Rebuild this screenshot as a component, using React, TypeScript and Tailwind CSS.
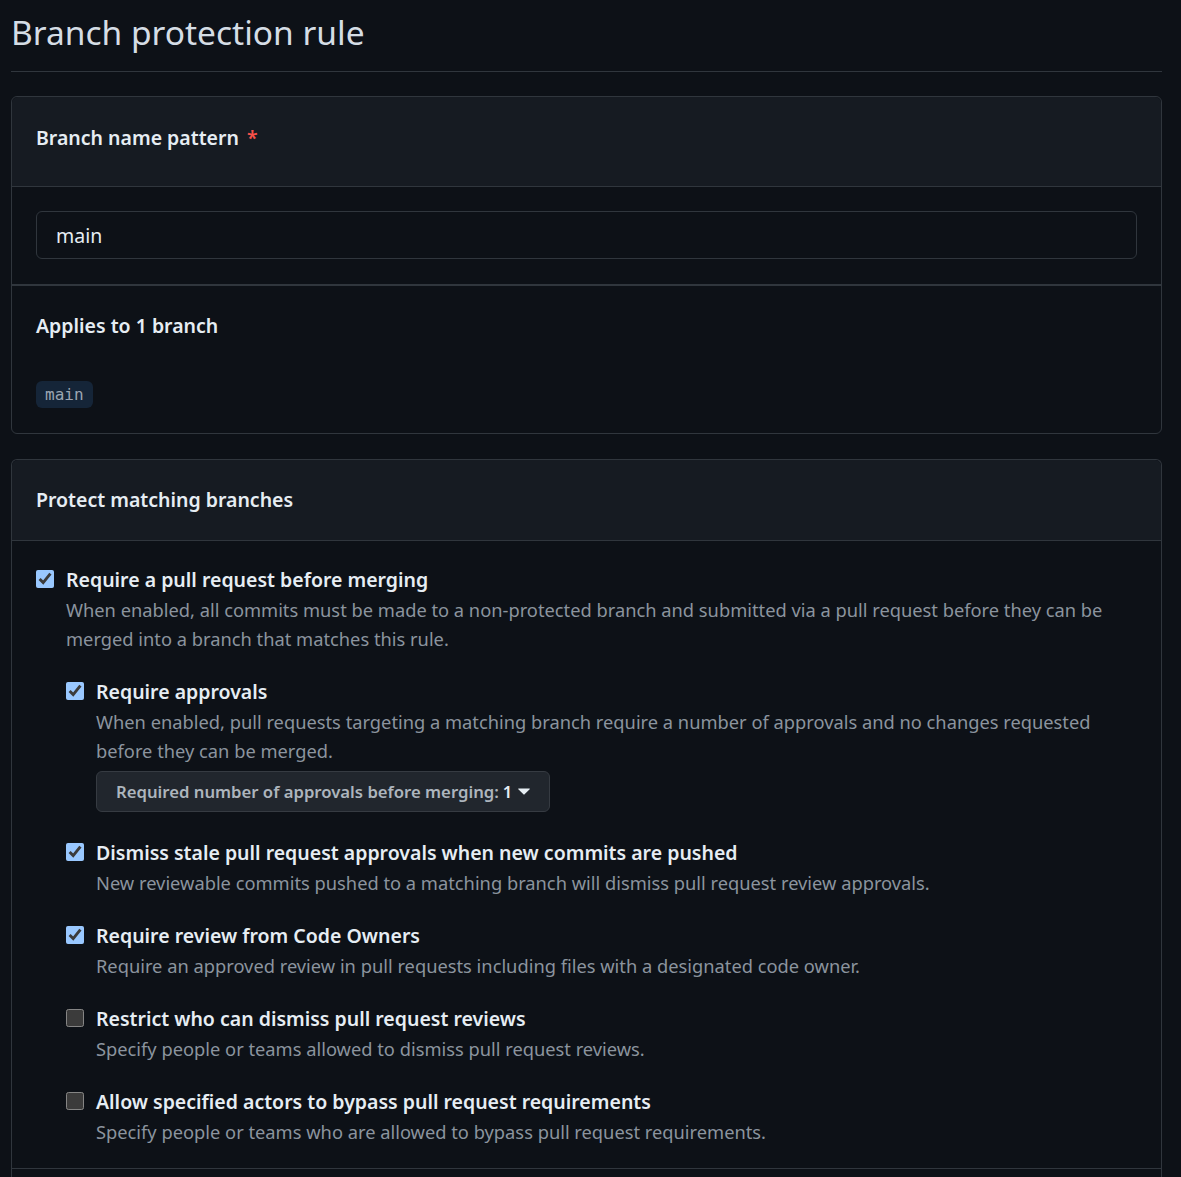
import React from 'react';

type Rule = {
  label: string;
  desc: string;
  checked: boolean;
  children?: React.ReactNode;
};

const Check: React.FC<{ checked: boolean }> = ({ checked }) => (
  <input
    type="checkbox"
    defaultChecked={checked}
    className="mt-[5px] m-0 h-[18px] w-[18px] shrink-0 [color-scheme:dark]"
  />
);

const RuleItem: React.FC<Rule> = ({ label, desc, checked, children }) => (
  <div className="flex gap-[12px]">
    <Check checked={checked} />
    <div className="min-w-0 flex-1">
      <div className="text-[19.5px] font-semibold leading-[30px] text-[#e6edf3]">{label}</div>
      <p className="text-[18.3px] leading-[29px] text-[#8b949e]">{desc}</p>
      {children}
    </div>
  </div>
);

const Caret = () => (
  <svg width="12" height="7" viewBox="0 0 12 7" className="ml-[6px] fill-current text-[#e6edf3]">
    <path d="M0.6 0.5h10.8a.4.4 0 0 1 .3.7L6.3 6.5a.45.45 0 0 1-.6 0L.3 1.2A.4.4 0 0 1 .6.5Z" />
  </svg>
);

const App: React.FC = () => {
  return (
    <div className="min-h-screen bg-[#0d1117] text-[#c9d1d9] font-['Noto_Sans',sans-serif]">
      <div className="pl-[11px] pr-[19px]">
        <h1 className="border-b border-[#30363d] pb-[16px] pt-[9px] text-[33.5px] font-normal leading-[46px] text-[#d5dde5]">
          Branch protection rule
        </h1>

        <section className="mt-[24px] rounded-[6px] border border-[#30363d]">
          <div className="flex h-[90px] items-center rounded-t-[6px] border-b border-[#30363d] bg-[#161b22] px-[24px] pb-[7px]">
            <h2 className="text-[19.5px] font-semibold text-[#e6edf3]">
              Branch name pattern <span className="ml-[3px] text-[#f85149]">*</span>
            </h2>
          </div>
          <div className="border-b-2 border-[#30363d] px-[24px] pb-[25px] pt-[24px]">
            <div className="flex h-[48px] items-center rounded-[6px] border border-[#30363d] bg-[#0d1117] px-[19px] pt-[2px] text-[19.5px] text-[#e6edf3]">
              main
            </div>
          </div>
          <div className="px-[24px] pb-[25px] pt-[25px]">
            <h3 className="text-[19.5px] font-semibold leading-[30px] text-[#e6edf3]">Applies to 1 branch</h3>
            <div className="mt-[40px] flex">
              <code className="rounded-[6px] bg-[#152538] px-[9px] py-[2px] font-['DejaVu_Sans_Mono',monospace] text-[16px] leading-[23px] text-[#9ba6b2]">
                main
              </code>
            </div>
          </div>
        </section>

        <section className="mt-[25px] rounded-t-[6px] border-x border-t border-[#30363d]">
          <div className="flex h-[81px] items-center rounded-t-[6px] border-b border-[#30363d] bg-[#161b22] px-[24px]">
            <h2 className="text-[19.5px] font-semibold text-[#e6edf3]">Protect matching branches</h2>
          </div>
          <div className="border-b border-[#30363d] px-[24px] pb-[22px] pt-[24px]">
            <RuleItem
              checked
              label="Require a pull request before merging"
              desc="When enabled, all commits must be made to a non-protected branch and submitted via a pull request before they can be merged into a branch that matches this rule."
            >
              <div className="mt-[24px] flex flex-col gap-[24px]">
                <RuleItem
                  checked
                  label="Require approvals"
                  desc="When enabled, pull requests targeting a matching branch require a number of approvals and no changes requested before they can be merged."
                >
                  <button className="mb-[2px] mt-[6px] flex h-[41px] items-center rounded-[6px] border border-[#363b42] bg-[#21262d] px-[19px] text-[16.7px] font-semibold text-[#adb5bd]">
                    Required number of approvals before merging: <span className="ml-[4px] text-[#e6edf3]">1</span>
                    <Caret />
                  </button>
                </RuleItem>
                <RuleItem
                  checked
                  label="Dismiss stale pull request approvals when new commits are pushed"
                  desc="New reviewable commits pushed to a matching branch will dismiss pull request review approvals."
                />
                <RuleItem
                  checked
                  label="Require review from Code Owners"
                  desc="Require an approved review in pull requests including files with a designated code owner."
                />
                <RuleItem
                  checked={false}
                  label="Restrict who can dismiss pull request reviews"
                  desc="Specify people or teams allowed to dismiss pull request reviews."
                />
                <RuleItem
                  checked={false}
                  label="Allow specified actors to bypass pull request requirements"
                  desc="Specify people or teams who are allowed to bypass pull request requirements."
                />
              </div>
            </RuleItem>
          </div>
          <div className="h-[20px]" />
        </section>
      </div>
    </div>
  );
};

export default App;
